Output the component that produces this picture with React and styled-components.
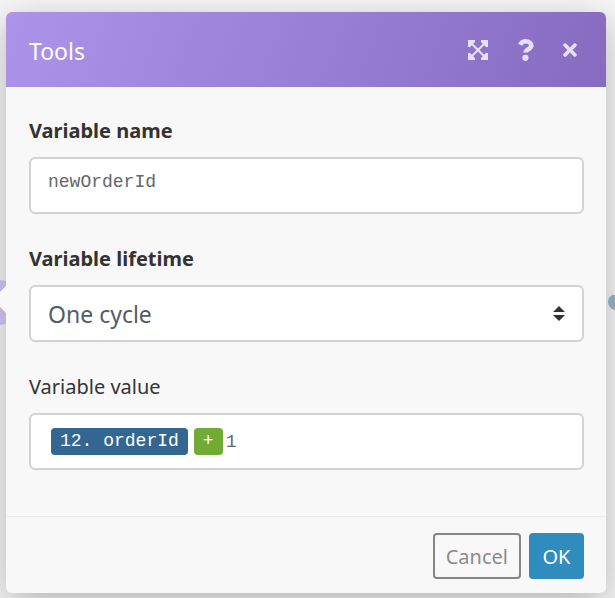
import React from "react";
import styled, { createGlobalStyle } from "styled-components";
import { FaTimes } from "react-icons/fa";

const GlobalStyle = createGlobalStyle`
  *, *::before, *::after { box-sizing: border-box; }
  body {
    margin: 0;
    background: #f6f6f6;
    font-family: "Noto Sans", "Open Sans", sans-serif;
    color: #333;
  }
`;

const Page = styled.main`
  position: relative;
  display: flex;
  align-items: flex-start;
  min-height: 100vh;
  padding: 12px 9px 5px 6px;
  overflow: hidden;
`;

const CanvasShape = styled.svg`
  position: absolute;
  z-index: 1;
  top: ${(p) => p.$top}px;
  ${(p) => p.$side}: 0;
`;

const Dialog = styled.form`
  position: relative;
  flex: 1;
  min-width: 0;
  overflow: hidden;
  border-radius: 6px;
  background: #f8f8f8;
  box-shadow: 0 10px 36px rgba(0, 0, 0, 0.27);
`;

const Header = styled.header`
  display: flex;
  align-items: center;
  justify-content: space-between;
  height: 75px;
  padding: 0 26px 0 23px;
  background: linear-gradient(110deg, #ac94eb, #866bc0);
  color: #fff;
`;

const Title = styled.h1`
  margin: 2px 0 0;
  font: 400 23px/32px "Noto Sans", sans-serif;
`;

const Actions = styled.div`
  display: flex;
  align-items: center;
  gap: 26px;
`;

const IconButton = styled.button`
  display: flex;
  padding: 0;
  border: 0;
  background: none;
  color: #e7e0f5;
  font-size: 20px;
  cursor: pointer;
`;

const Body = styled.div`
  display: grid;
  gap: 30px;
  padding: 29px 22px 46px 23px;
`;

const Field = styled.div`
  display: grid;
  gap: 12px;
`;

const Label = styled.label`
  font-size: 20px;
  line-height: 29px;
  font-weight: ${(p) => (p.$strong ? 700 : 400)};
`;

const control = `
  width: 100%;
  height: 57px;
  border: 2px solid #d3d3d3;
  border-radius: 6px;
  background: #fff;
  color: #555b63;
`;

const TextInput = styled.input`
  ${control}
  padding: 0 17px 7px;
  color: #62676e;
  font: 18px "Liberation Mono", monospace;
`;

const SelectBox = styled.div`
  position: relative;
`;

const Select = styled.select`
  ${control}
  display: block;
  padding: 0 48px 0 17px;
  appearance: none;
  font: 23px "Noto Sans", sans-serif;
`;

const Carets = styled.svg`
  position: absolute;
  top: 21px;
  right: 19px;
  pointer-events: none;
`;

const ValueBox = styled.div`
  ${control}
  display: flex;
  align-items: center;
  gap: 6px;
  padding: 0 20px;
  color: #62676e;
  font: 18px "Liberation Mono", monospace;
`;

const Pill = styled.span`
  padding: 0 9px;
  border-radius: 4px;
  background: ${(p) => p.$color};
  color: #fff;
  line-height: 27px;
  white-space: pre;
`;

const ValueInput = styled.input`
  flex: 1;
  min-width: 0;
  height: 27px;
  margin-left: -3px;
  padding: 0;
  border: 0;
  background: none;
  color: inherit;
  font: inherit;
`;

const Footer = styled.footer`
  display: flex;
  justify-content: flex-end;
  gap: 8px;
  padding: 16px 22px 14px;
  border-top: 1px solid #ececec;
`;

const Button = styled.button`
  min-width: 55px;
  height: 46px;
  padding: 0 11px;
  border: 2px solid ${(p) => (p.$primary ? "#2f8cbc" : "#868686")};
  border-radius: 4px;
  background: ${(p) => (p.$primary ? "#2f8cbc" : "#f8f8f8")};
  color: ${(p) => (p.$primary ? "#fff" : "#8b8b8b")};
  font: 20px "Noto Sans", sans-serif;
  cursor: pointer;
`;

function ExpandIcon() {
  return (
    <svg width="20" height="20" viewBox="0 0 20 20" aria-hidden="true">
      <path
        d="M0 0H7V2L5.2 3.8L10 8.6L14.8 3.8L13 2V0H20V7H18L16.2 5.2L11.4 10L16.2 14.8L18 13H20V20H13V18L14.8 16.2L10 11.4L5.2 16.2L7 18V20H0V13H2L3.8 14.8L8.6 10L3.8 5.2L2 7H0Z"
        fill="currentColor"
      />
    </svg>
  );
}

function QuestionIcon() {
  return (
    <svg width="20" height="22" viewBox="-4 0 20 22" fill="none" aria-hidden="true">
      <path
        d="M2.1 5.8C3.3 3.4 5 2.3 7.7 2.3c3.1 0 5.6 1.8 5.6 4.3 0 3.8-5.7 3.4-5.7 6.8"
        stroke="currentColor"
        strokeWidth="4.6"
      />
      <circle cx="7.4" cy="18.8" r="3.1" fill="currentColor" />
    </svg>
  );
}

export default function App() {
  return (
    <>
      <GlobalStyle />
      <Page>
        <CanvasShape $side="left" $top={280} width="6" height="45" aria-hidden="true">
          <path d="M0 0L6 1V44L0 45Z" fill="#bdb2de" />
          <path d="M6 6L0 12V27L6 33Z" fill="#f8f8f8" />
        </CanvasShape>
        <CanvasShape $side="right" $top={295} width="7" height="15" aria-hidden="true">
          <circle cx="8" cy="7" r="8" fill="#8aa3b8" />
        </CanvasShape>
        <Dialog onSubmit={(e) => e.preventDefault()} aria-labelledby="title">
          <Header>
            <Title id="title">Tools</Title>
            <Actions>
              <IconButton type="button" aria-label="Expand"><ExpandIcon /></IconButton>
              <IconButton type="button" aria-label="Help"><QuestionIcon /></IconButton>
              <IconButton type="button" aria-label="Close"><FaTimes /></IconButton>
            </Actions>
          </Header>
          <Body>
            <Field>
              <Label $strong htmlFor="name">Variable name</Label>
              <TextInput id="name" defaultValue="newOrderId" spellCheck={false} />
            </Field>
            <Field>
              <Label $strong htmlFor="lifetime">Variable lifetime</Label>
              <SelectBox>
                <Select id="lifetime"><option>One cycle</option></Select>
                <Carets width="12" height="15" viewBox="0 0 12 15" aria-hidden="true">
                  <path d="M6 0L12 6H0ZM0 9H12L6 15Z" fill="#333" />
                </Carets>
              </SelectBox>
            </Field>
            <Field>
              <Label htmlFor="value">Variable value</Label>
              <ValueBox>
                <Pill $color="#336791">12. orderId</Pill>
                <Pill $color="#71ab36">+</Pill>
                <ValueInput id="value" defaultValue="1" />
              </ValueBox>
            </Field>
          </Body>
          <Footer>
            <Button type="button">Cancel</Button>
            <Button type="submit" $primary>OK</Button>
          </Footer>
        </Dialog>
      </Page>
    </>
  );
}
